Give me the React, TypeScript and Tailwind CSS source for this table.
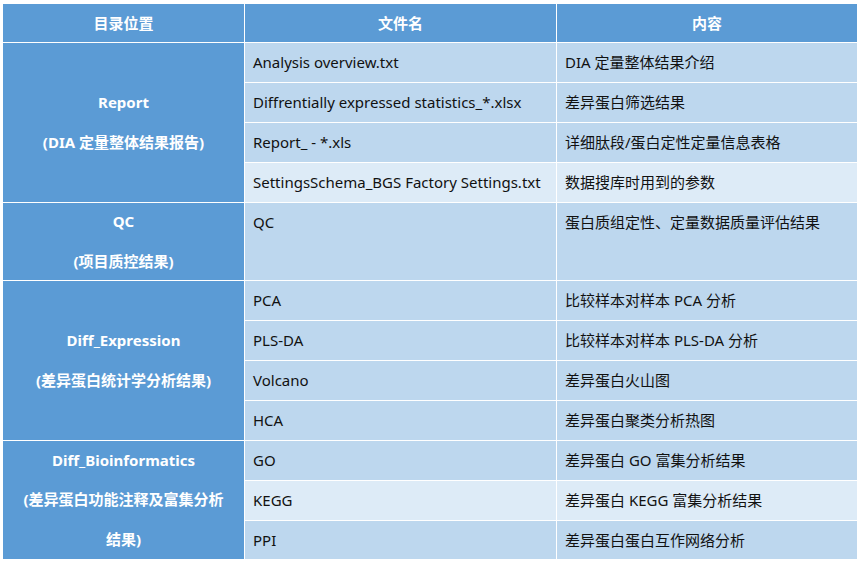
const rows: { file: string; desc: string; light?: boolean }[][] = [
	[
		{ file: "Analysis overview.txt", desc: "DIA 定量整体结果介绍" },
		{ file: "Diffrentially expressed statistics_*.xlsx", desc: "差异蛋白筛选结果" },
		{ file: "Report_ - *.xls", desc: "详细肽段/蛋白定性定量信息表格" },
		{ file: "SettingsSchema_BGS Factory Settings.txt", desc: "数据搜库时用到的参数", light: true },
	],
	[{ file: "QC", desc: "蛋白质组定性、定量数据质量评估结果" }],
	[
		{ file: "PCA", desc: "比较样本对样本 PCA 分析" },
		{ file: "PLS-DA", desc: "比较样本对样本 PLS-DA 分析" },
		{ file: "Volcano", desc: "差异蛋白火山图" },
		{ file: "HCA", desc: "差异蛋白聚类分析热图" },
	],
	[
		{ file: "GO", desc: "差异蛋白 GO 富集分析结果" },
		{ file: "KEGG", desc: "差异蛋白 KEGG 富集分析结果", light: true },
		{ file: "PPI", desc: "差异蛋白蛋白互作网络分析" },
	],
];

const groups = [
	{ lines: ["Report", "(DIA 定量整体结果报告)"], span: "row-span-4" },
	{ lines: ["QC", "(项目质控结果)"], span: "row-span-1" },
	{ lines: ["Diff_Expression", "(差异蛋白统计学分析结果)"], span: "row-span-4" },
	{ lines: ["Diff_Bioinformatics", "(差异蛋白功能注释及富集分析结果)"], span: "row-span-3" },
];

export default function App() {
	return (
		<div
			className="w-[857px] h-[565px] bg-white pt-[4px] pl-[3px]"
			style={{ fontFamily: '"Noto Sans", "Noto Sans CJK SC", sans-serif' }}
		>
			<div className="grid grid-cols-[241px_311px_1fr] grid-rows-[38px_repeat(4,39px)_77px_repeat(4,39px)_39px_39px_38px] gap-px bg-white text-[15px] text-[#111]">
				<div className="bg-[#5b9bd5] flex items-center justify-center font-bold text-white">目录位置</div>
				<div className="bg-[#5b9bd5] flex items-center justify-center font-bold text-white">文件名</div>
				<div className="bg-[#5b9bd5] flex items-center justify-center font-bold text-white">内容</div>

				{groups.map((g, gi) => (
					<>
						<div
							key={`g${gi}`}
							className={`${g.span} col-start-1 bg-[#5b9bd5] flex flex-col justify-center px-[16px] text-center font-bold text-white leading-[39.5px]`}
						>
							{g.lines.map((l) => (
								<div key={l}>{l}</div>
							))}
						</div>
						{rows[gi].map((r) => (
							<>
								<div
									key={`f${r.file}`}
									className={`col-start-2 px-[8px] leading-[39px] ${r.light ? "bg-[#ddebf7]" : "bg-[#bdd7ee]"}`}
								>
									{r.file}
								</div>
								<div
									key={`d${r.file}`}
									className={`col-start-3 px-[8px] leading-[39px] ${r.light ? "bg-[#ddebf7]" : "bg-[#bdd7ee]"}`}
								>
									{r.desc}
								</div>
							</>
						))}
					</>
				))}
			</div>
		</div>
	);
}
